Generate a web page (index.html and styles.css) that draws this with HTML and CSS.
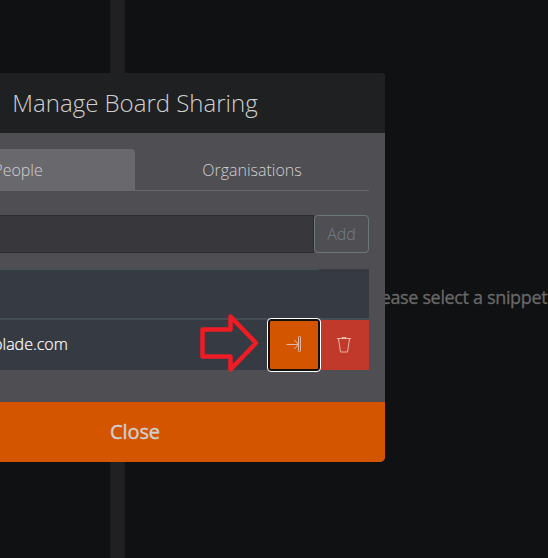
FILE: index.html
```html
<!DOCTYPE html>
<html lang="en">
<head>
<meta charset="utf-8">
<title>Manage Board Sharing</title>
<link rel="stylesheet" href="styles.css">
</head>
<body>
<main class="workspace">
  <aside class="sidebar"></aside>
  <div class="splitter"></div>
  <section class="preview"><p>Please select a snippet</p></section>
</main>
<div class="modal" role="dialog">
  <header class="modal-header"><h1>Manage Board Sharing</h1></header>
  <div class="modal-body">
    <nav class="tabs"><a class="tab active">People</a><a class="tab">Organisations</a></nav>
    <div class="add-row"><input class="field" type="text"><button class="add">Add</button></div>
    <div class="members">
      <div class="member first"><span class="email"></span><span class="spacer"></span></div>
      <div class="member">
        <span class="email">blade.com</span>
        <button class="action transfer" aria-label="Transfer">
          <svg width="18" height="18" viewBox="0 0 18 18"><path d="M1.500 8.500h12M9.500 4l4 4.500-4 4.500"/><rect x="13.500" y=".5" width="2" height="15" rx=".8"/></svg>
        </button>
        <button class="action delete" aria-label="Delete">
          <svg width="18" height="18" viewBox="0 0 18 18"><path d="M2 2.500h14M7 2.500v-1h4v1M3.500 3l2 13h7l2-13"/></svg>
        </button>
      </div>
    </div>
  </div>
  <button class="close">Close</button>
</div>
<svg class="pointer" width="62" height="62" viewBox="199 312 62 62"><path d="M202.500 329.500h28v-13L256 343l-25.500 26.500v-13h-28z"/></svg>
</body>
</html>
```
FILE: styles.css
```css
* { box-sizing: border-box; }
body {
  margin: 0;
  height: 558px;
  overflow: hidden;
  position: relative;
  background: #101112;
  font-family: "Open Sans", sans-serif;
  font-weight: 300;
}
h1, p { margin: 0; font-weight: inherit; }
button { border: 0; padding: 0; font: inherit; }
svg { fill: none; }
.workspace { display: flex; height: 100%; }
.sidebar { width: 110px; }
.splitter { width: 15px; background: #202022; border: solid #1b1b1d; border-width: 0 1px; }
.preview {
  flex: 1;
  display: flex;
  align-items: center;
  padding: 36px 0 0 241px;
  color: #686868;
  font-size: 18px;
  font-weight: 400;
  letter-spacing: -.35px;
  -webkit-text-stroke: .3px;
  white-space: nowrap;
}
.modal {
  position: absolute;
  left: -115px;
  top: 73px;
  width: 500px;
  height: 389px;
  display: flex;
  flex-direction: column;
  border-radius: 5px;
  overflow: hidden;
  background: #4f4e53;
  color: #d0d0d0;
}
.modal-header {
  height: 60px;
  display: flex;
  align-items: center;
  justify-content: center;
  padding-bottom: 2px;
  background: #1f2021;
}
.modal-header h1 { font-size: 24px; }
.modal-body { flex: 1; padding: 16px; }
.tabs { display: flex; height: 42px; border-bottom: 1px solid #69686d; }
.tab {
  flex: 1;
  display: flex;
  align-items: center;
  justify-content: center;
  font-size: 16px;
  border-radius: 4px 4px 0 0;
}
.tab.active { background: #69686d; }
.add-row { display: flex; height: 38px; margin: 24px 0 16px; }
.field { flex: 1; background: #38373b; border: 1px solid #2d2d31; outline: 0; }
.add {
  width: 55px;
  border: 1px solid #6b777c;
  border-radius: 4px;
  background: transparent;
  color: #737e86;
  font-size: 16px;
}
.members { background: #363a42; }
.member { display: flex; height: 50px; align-items: center; }
.member.first { height: 51px; border-bottom: 2px solid #454d54; }
.email {
  flex: 1;
  padding: 0 0 2px 92px;
  color: #fff;
  font-size: 16px;
  -webkit-text-stroke: .2px;
}
.first .email { align-self: flex-start; height: 1px; padding: 0; background: #43515b; }
.spacer { width: 50px; }
.action { width: 50px; height: 50px; display: flex; align-items: center; justify-content: center; stroke: #e2b7a8; stroke-width: 1; }
.transfer {
  position: relative;
  background: #d35500;
  border: 1px solid #111;
  outline: 1px solid #fff;
  outline-offset: 1px;
  box-shadow: 0 0 0 1px #111;
  border-radius: 2px;
}
.delete { background: #c0392b; }
.close {
  height: 60px;
  padding-bottom: 2px;
  background: #d35500;
  color: #d0cfd2;
  font-size: 20px;
  font-weight: 400;
  letter-spacing: -.1px;
  -webkit-text-stroke: .4px;
}
.pointer { position: absolute; left: 199px; top: 312px; stroke: #ee1c25; stroke-width: 4.500; stroke-linejoin: round; }
```
